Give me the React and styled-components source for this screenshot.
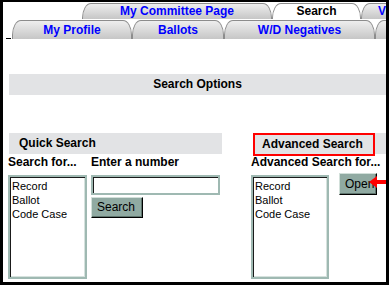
import React from 'react';
import styled, { createGlobalStyle } from 'styled-components';

const GlobalStyle = createGlobalStyle`
  body {
    margin: 0;
    background: #fff;
    font-family: "Liberation Sans", Arial, sans-serif;
  }
`;

const Frame = styled.div`
  width: 389px;
  height: 285px;
  box-sizing: border-box;
  border: solid #000;
  border-width: 2px 3px 3px 3px;
  background: #fff;
  overflow: hidden;
`;

const TabRow = styled.div`
  display: flex;
  align-items: flex-end;
  height: ${(p) => p.$height}px;
  padding-left: ${(p) => p.$indent}px;
  overflow: hidden;
  white-space: nowrap;
`;

const Tab = styled.div`
  flex: 0 0 ${(p) => p.$width}px;
  height: ${(p) => p.$tall}px;
  box-sizing: border-box;
  border: 1px solid #8c8c8c;
  border-bottom: none;
  border-radius: 9px 9px 0 0 / 15px 15px 0 0;
  background: ${(p) => (p.$active ? '#fff' : 'linear-gradient(#eeeeee, #c6c6c6)')};
  color: ${(p) => (p.$active ? '#000' : '#0000ff')};
  font-size: 12px;
  font-weight: bold;
  line-height: ${(p) => p.$tall - 1}px;
  text-align: ${(p) => (p.$partial ? 'left' : 'center')};
  padding-left: ${(p) => (p.$partial ? 16 : 0)}px;
  overflow: hidden;
`;

const Underscore = styled.span`
  flex: 0 0 5px;
  margin: 0 1px 0 3px;
  border-bottom: 1px solid #000;
  align-self: flex-end;
`;

const Main = styled.div`
  padding-left: 5px;
`;

const Bar = styled.div`
  margin: ${(p) => p.$top}px 0 0 ${(p) => p.$left}px;
  height: 21px;
  background: #e2e3e5;
  color: #000;
  font-size: 12px;
  font-weight: bold;
  line-height: 21px;
  padding-left: ${(p) => p.$pad}px;
  display: flex;
  justify-content: ${(p) => (p.$center ? 'center' : 'flex-start')};
`;

const Highlight = styled.span`
  height: 23px;
  box-sizing: border-box;
  border: 2px solid #ff0000;
  padding: 0 10px 0 7px;
  line-height: 19px;
  margin-left: -1px;
`;

const Columns = styled.div`
  display: grid;
  grid-template-columns: 243px 1fr;
  margin-top: 38px;
`;

const Column = styled.div`
  display: flex;
  flex-direction: column;
`;

const Fields = styled.div`
  display: grid;
  grid-template-columns: ${(p) => p.$cols};
`;

const Label = styled.div`
  margin-top: 1px;
  font-size: 12px;
  font-weight: bold;
  line-height: 15px;
  white-space: nowrap;
`;

const Stack = styled.div`
  display: flex;
  flex-direction: column;
  align-items: flex-start;
  gap: 2px;
  margin-top: ${(p) => p.$top}px;
  position: relative;
`;

const ListBox = styled.div`
  width: ${(p) => p.$width}px;
  height: 104px;
  margin-top: 5px;
  box-sizing: border-box;
  border: 2px solid #9fb9b2;
  box-shadow: inset 1px 1px 0 #1a1a1a, inset -1px -1px 0 #d6e2de;
  padding: 2px 1px 0 2px;
  font-size: 11px;
  line-height: 14px;
  color: #000;
`;

const TextBox = styled.div`
  width: 129px;
  height: 20px;
  box-sizing: border-box;
  border: 2px solid #9fb9b2;
  box-shadow: inset 1px 1px 0 #1a1a1a;
  background: #fff;
`;

const Button = styled.div`
  width: ${(p) => p.$width}px;
  height: ${(p) => p.$height}px;
  box-sizing: border-box;
  background: #90aaa2;
  border: 1px solid;
  border-color: #d2e0da #000 #000 #d2e0da;
  box-shadow: inset -1px -1px 0 #5f756e;
  font-size: 12px;
  line-height: ${(p) => p.$height - 2}px;
  padding-left: 5px;
  color: #000;
`;

const Arrow = styled.svg`
  position: absolute;
  left: 30px;
  top: 3px;
`;

const options = ['Record', 'Ballot', 'Code Case'];

const Options = ({ width }) => (
  <ListBox $width={width}>
    {options.map((o) => (
      <div key={o}>{o}</div>
    ))}
  </ListBox>
);

export default function App() {
  return (
    <>
      <GlobalStyle />
      <Frame>
        <TabRow $height={17} $indent={79}>
          <Tab $width={190} $tall={16}>My Committee Page</Tab>
          <Tab $width={89} $tall={16} $active>Search</Tab>
          <Tab $width={40} $tall={16} $partial>V</Tab>
        </TabRow>
        <TabRow $height={20} $indent={0}>
          <Underscore />
          <Tab $width={120} $tall={19}>My Profile</Tab>
          <Tab $width={92} $tall={19}>Ballots</Tab>
          <Tab $width={151} $tall={19}>W/D Negatives</Tab>
          <Tab $width={40} $tall={19} $partial />
        </TabRow>
        <Main>
          <Bar $top={35} $left={1} $pad={0} $center>Search Options</Bar>
          <Columns>
            <Column>
              <Bar $top={0} $left={1} $pad={10} style={{ width: 203 }}>
                Quick Search
              </Bar>
              <Fields $cols="83px 1fr">
                <div>
                  <Label>Search for...</Label>
                  <Options width={79} />
                </div>
                <div>
                  <Label>Enter a number</Label>
                  <Stack $top={5}>
                    <TextBox />
                    <Button $width={52} $height={21}>Search</Button>
                  </Stack>
                </div>
              </Fields>
            </Column>
            <Column>
              <Bar $top={0} $left={3} $pad={0}>
                <Highlight>Advanced Search</Highlight>
              </Bar>
              <Fields $cols="88px 1fr">
                <div>
                  <Label>Advanced Search for...</Label>
                  <Options width={78} />
                </div>
                <div>
                  <Label>&nbsp;</Label>
                  <Stack $top={3}>
                    <Button $width={38} $height={22}>Open</Button>
                    <Arrow width="18" height="12" viewBox="0 0 18 12">
                      <polygon points="0,6 8,0 8,4 18,4 18,8 8,8 8,12" fill="#ff0000" />
                    </Arrow>
                  </Stack>
                </div>
              </Fields>
            </Column>
          </Columns>
        </Main>
      </Frame>
    </>
  );
}
